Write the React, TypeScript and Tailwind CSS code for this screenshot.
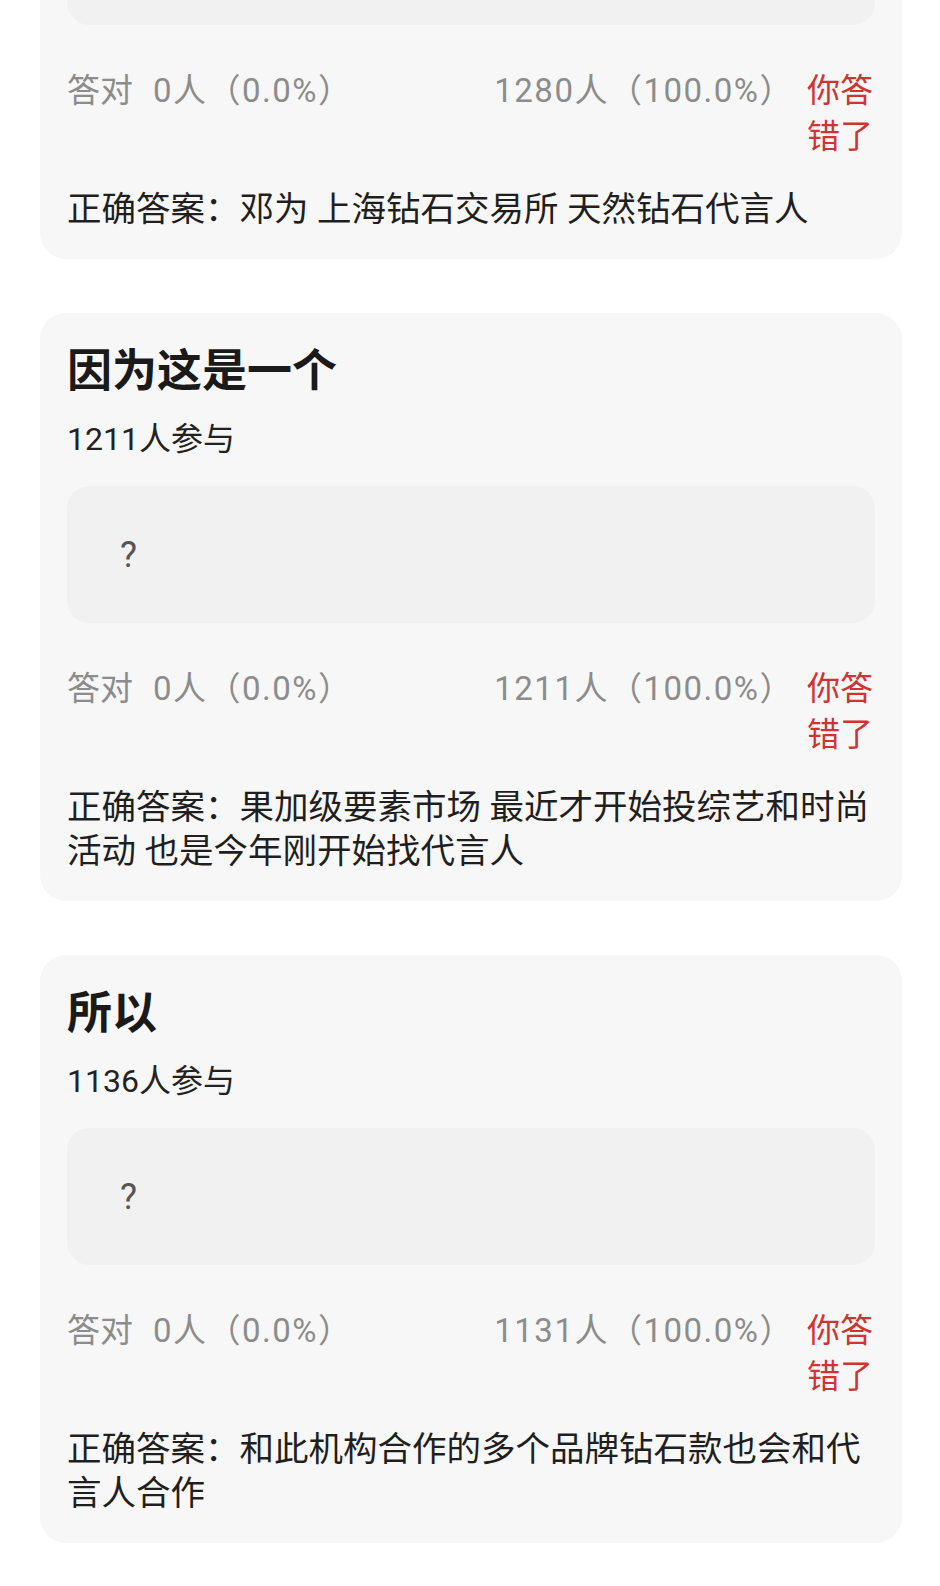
import React from "react";

interface Question {
  title: string;
  joined: number;
  wrong: number;
  answer: string;
}

const questions: Question[] = [
  {
    title: "这是哪个品牌",
    joined: 1280,
    wrong: 1280,
    answer: "邓为 上海钻石交易所 天然钻石代言人",
  },
  {
    title: "因为这是一个",
    joined: 1211,
    wrong: 1211,
    answer: "果加级要素市场 最近才开始投综艺和时尚活动 也是今年刚开始找代言人",
  },
  {
    title: "所以",
    joined: 1136,
    wrong: 1131,
    answer: "和此机构合作的多个品牌钻石款也会和代言人合作",
  },
];

function QuizCard({ q }: { q: Question }) {
  return (
    <div className="w-[862px] rounded-[26px] bg-[#f7f7f7] pt-[33px] pb-[28px] pl-[27px] pr-[27px]">
      <h3 className="text-[45px] font-bold leading-[52px] text-[#1a1a1a]">{q.title}</h3>
      <p className="mt-[23px] text-[32px] leading-[36px] text-[#222222]">{q.joined}人参与</p>

      <div className="mt-[29px] flex h-[137px] items-center rounded-[22px] bg-[#f1f1f1] pl-[53px]">
        <span className="text-[36px] text-[#555555]">?</span>
      </div>

      <div className="mt-[43px] flex items-start text-[33px] leading-[46px]">
        <div className="flex-1 text-[#8c8c8c]">
          <span className="mr-[20px]">答对</span>
          <span className="tracking-[1.5px]">0人（0.0%）</span>
        </div>
        <div className="tracking-[1.5px] text-[#8c8c8c]">{q.wrong}人（100.0%）</div>
        <div className="ml-[13px] w-[68px] text-[#cf3433]">你答错了</div>
      </div>

      <p className="mt-[27px] text-[34.5px] leading-[44px] text-[#1f1f1f]">正确答案：{q.answer}</p>
    </div>
  );
}

export default function App() {
  return (
    <div
      className="h-screen w-full overflow-hidden bg-white"
      style={{ fontFamily: 'Roboto, "Noto Sans CJK SC", "Noto Sans", sans-serif' }}
    >
      <div className="-mt-[285px] flex flex-col gap-[54px] pl-[40px]">
        {questions.map((q) => (
          <QuizCard key={q.title} q={q} />
        ))}
      </div>
    </div>
  );
}
